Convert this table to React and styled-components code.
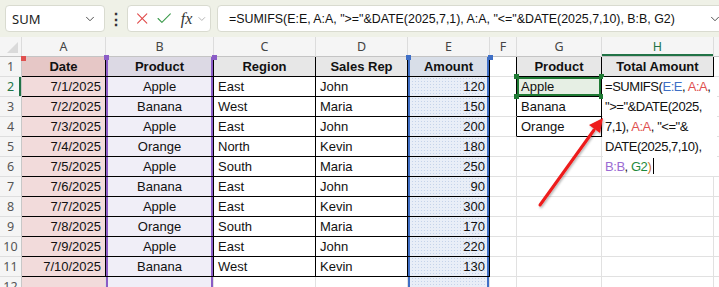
import React from "react";
import styled, { createGlobalStyle } from "styled-components";
import { ChevronDown, X, Check } from "lucide-react";

const GlobalStyle = createGlobalStyle`
  html, body { margin: 0; padding: 0; background: #fff; }
  body {
    width: 719px;
    height: 287px;
    overflow: hidden;
    font-family: "Liberation Sans", Arial, sans-serif;
  }
`;

const rows = [
  ["7/1/2025", "Apple", "East", "John", "120"],
  ["7/2/2025", "Banana", "West", "Maria", "150"],
  ["7/3/2025", "Apple", "East", "John", "200"],
  ["7/4/2025", "Orange", "North", "Kevin", "180"],
  ["7/5/2025", "Apple", "South", "Maria", "250"],
  ["7/6/2025", "Banana", "East", "John", "90"],
  ["7/7/2025", "Apple", "East", "Kevin", "300"],
  ["7/8/2025", "Orange", "South", "Maria", "170"],
  ["7/9/2025", "Apple", "East", "John", "220"],
  ["7/10/2025", "Banana", "West", "Kevin", "130"],
];
const headers = ["Date", "Product", "Region", "Sales Rep", "Amount"];
const letters = ["A", "B", "C", "D", "E", "F", "G", "H", ""];
const lookup = ["Product", "Apple", "Banana", "Orange"];

// colours Excel gives each referenced range while editing
const REF = { E: "#3f6fc6", A: "#e0504f", B: "#8a5cc6", G: "#1f7a34" };

/* ---------- formula bar ---------- */

const Bar = styled.div`
  display: flex;
  align-items: center;
  height: 37px;
  background: #eff1e7;
  padding-left: 5px;
  font-family: "Noto Sans", "Liberation Sans", sans-serif;
`;

const Field = styled.div`
  display: flex;
  align-items: center;
  box-sizing: border-box;
  height: 27px;
  background: #fff;
  border: 1px solid #d9dbd0;
  border-radius: 4px;
`;

const NameBox = styled(Field)`
  width: 100px;
  justify-content: space-between;
  padding: 0 7px 0 6px;
  font-size: 13px;
  color: #222;
`;

const Kebab = styled.div`
  width: 22px;
  text-align: center;
  font-size: 16px;
  font-weight: bold;
  color: #333;
`;

const FxBox = styled(Field)`
  width: 84px;
  padding: 0 2px 0 5px;
  gap: 4px;
`;

const Fx = styled.span`
  font-family: "Liberation Serif", serif;
  font-style: italic;
  font-size: 16px;
  color: #333;
  margin-left: 3px;
`;

const FormulaInput = styled(Field)`
  flex: 1;
  margin-left: 6px;
  margin-right: -8px;
  justify-content: space-between;
  padding: 0 4px 0 11px;
  font-family: "Liberation Sans", Arial, sans-serif;
  font-size: 12.4px;
  color: #111;
  white-space: nowrap;
`;

/* ---------- sheet ---------- */

const Sheet = styled.div`
  position: relative;
  display: grid;
  grid-template-columns: 22px 84px 108px 102px 92px 82px 27px 85px 112px 1fr;
  grid-auto-rows: 20px;
  font-size: 13px;
  background: #fff;
`;

const ColHead = styled.div`
  box-sizing: border-box;
  display: flex;
  align-items: center;
  justify-content: center;
  background: #f5f5f5;
  border-right: 1px solid #dcdcdc;
  border-bottom: 1px solid #c4c4c4;
  color: ${(p) => (p.$active ? "#217346" : "#444")};
  box-shadow: ${(p) => (p.$active ? "inset 0 -2px 0 #217346" : "none")};
  font-family: "Noto Sans", "Liberation Sans", sans-serif;
  font-size: 12.5px;
`;

const Corner = styled(ColHead)`
  position: relative;
  &::after {
    content: "";
    position: absolute;
    right: 3px;
    bottom: 3px;
    border-style: solid;
    border-width: 0 0 11px 11px;
    border-color: transparent transparent #dadada transparent;
  }
`;

const RowHead = styled.div`
  box-sizing: border-box;
  display: flex;
  align-items: center;
  justify-content: center;
  background: #f5f5f5;
  border-right: 1px solid #c8c8c8;
  border-bottom: 1px solid #dedede;
  color: ${(p) => (p.$active ? "#217346" : "#555")};
  box-shadow: ${(p) => (p.$active ? "inset -2px 0 0 #217346" : "none")};
  font-family: "Noto Sans", "Liberation Sans", sans-serif;
  font-size: 12.5px;
`;

const edgeShadow = (p) => {
  if (p.$box) return `inset 0 0 0 2px ${p.$box}`;
  if (p.$edge) return `inset 2px 0 0 ${p.$edge}, inset -2px 0 0 ${p.$edge}`;
  return "none";
};

const Cell = styled.div`
  box-sizing: border-box;
  padding: 0 4px;
  line-height: 19px;
  white-space: nowrap;
  overflow: hidden;
  text-align: ${(p) => p.$align || "left"};
  font-weight: ${(p) => (p.$bold ? "bold" : "normal")};
  color: #111;
  background-color: ${(p) => p.$bg || "#fff"};
  background-image: ${(p) =>
    p.$dots ? "radial-gradient(#c5d3ea 0.7px, transparent 0.8px)" : "none"};
  background-size: 3px 3px;
  border-right: 1px solid ${(p) => p.$r || "#e1e1e1"};
  border-bottom: 1px solid ${(p) => p.$b || "#e1e1e1"};
  box-shadow: ${edgeShadow};
`;

/* ---------- overlays ---------- */

const Handle = styled.div`
  position: absolute;
  width: 5px;
  height: 5px;
  left: ${(p) => p.$x}px;
  top: ${(p) => p.$y}px;
  background: ${(p) => p.$c};
`;

const EditBox = styled.div`
  position: absolute;
  left: 603px;
  top: 40px;
  width: 112px;
  height: 99px;
  background: #fff;
  padding-left: 2px;
  font-size: 13px;
  letter-spacing: -0.45px;
  color: #111;
`;

const EditLine = styled.div`
  height: 20px;
  line-height: 20px;
  white-space: nowrap;
`;

const Tok = styled.span`
  color: ${(p) => p.$c};
`;

const Caret = styled.span`
  display: inline-block;
  width: 1px;
  height: 16px;
  margin-left: 2px;
  background: #000;
  vertical-align: -3px;
`;

const Arrow = styled.svg`
  position: absolute;
  left: 0;
  top: 0;
  pointer-events: none;
`;

function cellFor(r, c) {
  const key = `${r}-${c}`;
  const inTable = r >= 1 && r <= 11 && c <= 4;
  const fills = ["#f2dbdb", "#f0eef7", "#fff", "#fff", "#e9eef7"];
  const heads = ["#e6c7c6", "#dcd9e4", "#e7e7e7", "#e7e7e7", "#d8dee8"];
  if (c <= 4) {
    const bg = r === 1 ? heads[c] : fills[c];
    let text = "";
    let align = "left";
    if (r === 1) {
      text = headers[c];
      align = "center";
    } else if (r <= 11) {
      text = rows[r - 2][c];
      align = c === 0 || c === 4 ? "right" : c === 1 ? "center" : "left";
    }
    return (
      <Cell
        key={key}
        $bg={bg}
        $dots={c === 4 && r > 1}
        $bold={r === 1}
        $align={align}
        $edge={c === 1 ? REF.B : c === 4 ? REF.E : undefined}
        $b={inTable ? "#000" : undefined}
        $r={inTable ? "#000" : c === 0 ? "#ddd" : undefined}
      >
        {text}
      </Cell>
    );
  }
  if (c === 5) return <Cell key={key} $r={r <= 4 ? "#000" : undefined} />;
  if (c === 6) {
    const on = r <= 4;
    return (
      <Cell
        key={key}
        $bg={r === 1 ? "#e7e7e7" : r === 2 ? "#e6efe4" : "#fff"}
        $box={r === 2 ? REF.G : undefined}
        $bold={r === 1}
        $align={r === 1 ? "center" : "left"}
        $r={on ? "#000" : undefined}
        $b={on ? "#000" : undefined}
      >
        {on ? lookup[r - 1] : ""}
      </Cell>
    );
  }
  if (c === 7) {
    return (
      <Cell
        key={key}
        $bg={r === 1 ? "#e7e7e7" : "#fff"}
        $bold={r === 1}
        $align="center"
        $r={r === 1 ? "#000" : undefined}
        $b={r === 1 ? "#000" : undefined}
      >
        {r === 1 ? "Total Amount" : ""}
      </Cell>
    );
  }
  return <Cell key={key} $r="#fff" />;
}

const handles = [
  [104, 18, REF.B],
  [212, 18, REF.B],
  [406, 18, REF.E],
  [488, 18, REF.E],
  [21, 19, REF.A],
  [514, 37, REF.G],
  [599, 37, REF.G],
  [514, 57, REF.G],
  [599, 57, REF.G],
];

export default function App() {
  const grid = [<Corner key="corner" />];
  letters.forEach((l, i) =>
    grid.push(
      <ColHead key={`h${i}`} $active={l === "H"}>
        {l}
      </ColHead>
    )
  );
  for (let r = 1; r <= 12; r++) {
    grid.push(
      <RowHead key={`r${r}`} $active={r === 2}>
        {r}
      </RowHead>
    );
    for (let c = 0; c <= 8; c++) grid.push(cellFor(r, c));
  }

  return (
    <>
      <GlobalStyle />
      <Bar>
        <NameBox>
          SUM
          <ChevronDown size={14} color="#444" strokeWidth={1.6} />
        </NameBox>
        <Kebab>⋮</Kebab>
        <FxBox>
          <X size={19} color="#e04848" strokeWidth={1.4} />
          <Check size={19} color="#3a9a4a" strokeWidth={1.4} />
          <Fx>fx</Fx>
          <ChevronDown size={12} color="#999" strokeWidth={1.5} />
        </FxBox>
        <FormulaInput>
          <span>
            =SUMIFS(E:E, A:A, "&gt;="&amp;DATE(2025,7,1), A:A,
            "&lt;="&amp;DATE(2025,7,10), B:B, G2)
          </span>
          <ChevronDown size={14} color="#444" strokeWidth={1.6} />
        </FormulaInput>
      </Bar>
      <Sheet>
        {grid}

        {handles.map(([x, y, c], i) => (
          <Handle key={i} $x={x} $y={y} $c={c} />
        ))}

        <EditBox>
          <EditLine>
            =SUMIFS(<Tok $c={REF.E}>E:E</Tok>, <Tok $c={REF.A}>A:A</Tok>,
          </EditLine>
          <EditLine>"&gt;="&amp;DATE(2025,</EditLine>
          <EditLine>
            7,1), <Tok $c={REF.A}>A:A</Tok>, "&lt;="&amp;
          </EditLine>
          <EditLine>DATE(2025,7,10),</EditLine>
          <EditLine>
            <Tok $c="#9b6bd3">B:B</Tok>, <Tok $c="#1f8a3c">G2</Tok>
            <Tok $c="#c8742a">)</Tok>
            <Caret />
          </EditLine>
        </EditBox>

        <Arrow width="719" height="250">
          <defs>
            <filter id="sh" x="-20%" y="-20%" width="140%" height="140%">
              <feDropShadow dx="1" dy="1.5" stdDeviation="1" floodColor="#000" floodOpacity="0.3" />
            </filter>
          </defs>
          <g filter="url(#sh)">
            <line x1="540" y1="168" x2="594" y2="93" stroke="#ee1b1b" strokeWidth="3" strokeLinecap="round" />
            <polygon points="603,81 600,96 589,88" fill="#ee1b1b" />
          </g>
        </Arrow>
      </Sheet>
    </>
  );
}
